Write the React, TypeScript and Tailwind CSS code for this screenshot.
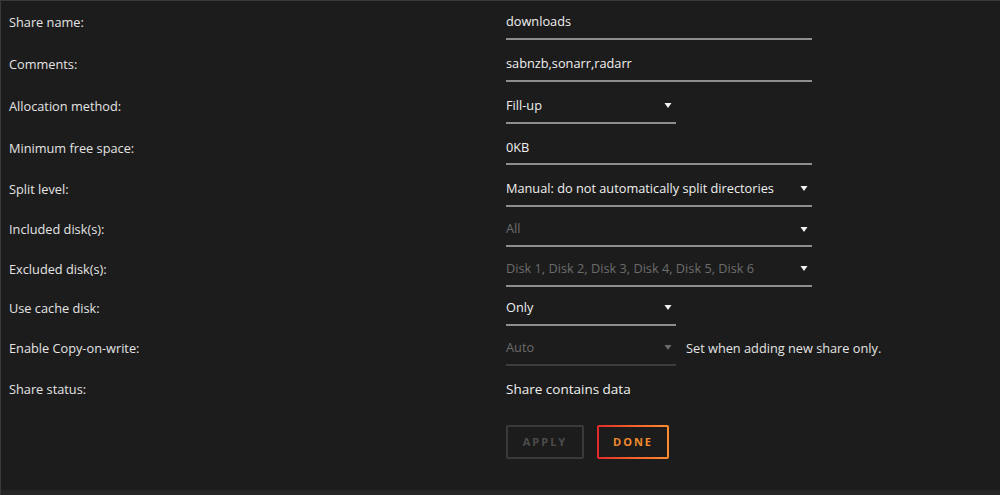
const font = { fontFamily: '"Open Sans", "Noto Sans", sans-serif' };

type Field = {
  label: string;
  value: string;
  kind: 'text' | 'select';
  width: 'long' | 'short';
  rowH: string;
  muted?: boolean;
  note?: string;
};

const fields: Field[] = [
  { label: 'Share name:', value: 'downloads', kind: 'text', width: 'long', rowH: 'h-[43px]' },
  { label: 'Comments:', value: 'sabnzb,sonarr,radarr', kind: 'text', width: 'long', rowH: 'h-[42px]' },
  { label: 'Allocation method:', value: 'Fill-up', kind: 'select', width: 'short', rowH: 'h-[41.5px]' },
  { label: 'Minimum free space:', value: '0KB', kind: 'text', width: 'long', rowH: 'h-[41.5px]' },
  { label: 'Split level:', value: 'Manual: do not automatically split directories', kind: 'select', width: 'long', rowH: 'h-[41px]' },
  { label: 'Included disk(s):', value: 'All', kind: 'select', width: 'long', muted: true, rowH: 'h-[40px]' },
  { label: 'Excluded disk(s):', value: 'Disk 1, Disk 2, Disk 3, Disk 4, Disk 5, Disk 6', kind: 'select', width: 'long', muted: true, rowH: 'h-[39px]' },
  { label: 'Use cache disk:', value: 'Only', kind: 'select', width: 'short', rowH: 'h-[39.5px]' },
  { label: 'Enable Copy-on-write:', value: 'Auto', kind: 'select', width: 'short', muted: true, note: 'Set when adding new share only.', rowH: 'h-[40.5px]' },
];

const Arrow = ({ muted }: { muted?: boolean }) => (
  <svg width="8" height="7" viewBox="0 0 8 7" className="shrink-0">
    <path d="M0.5 1 L7.5 1 L4 6 Z" fill={muted ? '#6a6a6a' : '#f2f2f2'} />
  </svg>
);

const App = () => {
  return (
    <div
      className="w-[1000px] h-[495px] bg-[#1c1c1c] border-t border-l border-[#3a3a3a] overflow-hidden flex flex-col"
      style={font}
    >
      <div className="flex-1">
        {fields.map((f) => {
          const dim = f.label === 'Enable Copy-on-write:';
          return (
            <div key={f.label} className={'flex items-center ' + f.rowH}>
              <div className="w-[505px] pl-[8px] text-[12.75px] text-[#e4e4e4]">{f.label}</div>
              <div
                className={
                  (f.width === 'long' ? 'w-[306px] ' : 'w-[170px] ') +
                  'h-[34px] flex items-center justify-between pr-[4px] border-b-2 ' +
                  (dim ? 'border-[#3c3c3c]' : 'border-[#8e8e8e]')
                }
              >
                <span className={'text-[12.75px] ' + (f.muted ? 'text-[#6c6c6c]' : 'text-[#f0f0f0]')}>{f.value}</span>
                {f.kind === 'select' && <Arrow muted={dim} />}
              </div>
              {f.note && <span className="ml-[10px] text-[12.75px] text-[#e4e4e4]">{f.note}</span>}
            </div>
          );
        })}
        <div className="flex items-center h-[41px]">
          <div className="w-[505px] pl-[8px] text-[12.75px] text-[#e4e4e4]">Share status:</div>
          <div className="text-[13.5px] text-[#f0f0f0]">Share contains data</div>
        </div>
        <div className="flex gap-[13px] pl-[505px] pt-[15px]">
          <button className="w-[78px] h-[34px] border-2 border-[#3a3a3a] rounded-[2px] text-[11px] font-bold tracking-[2px] text-[#4c4c4c]">
            APPLY
          </button>
          <div className="w-[72px] h-[34px] p-[2px] rounded-[2px] bg-gradient-to-r from-[#e22828] to-[#ff8c2f]">
            <button className="w-full h-full bg-[#1c1c1c] text-[11px] font-bold tracking-[2px] text-[#f28a2e]">
              DONE
            </button>
          </div>
        </div>
      </div>
      <div className="h-[5px] bg-[#262626]" />
    </div>
  );
};

export default App;
